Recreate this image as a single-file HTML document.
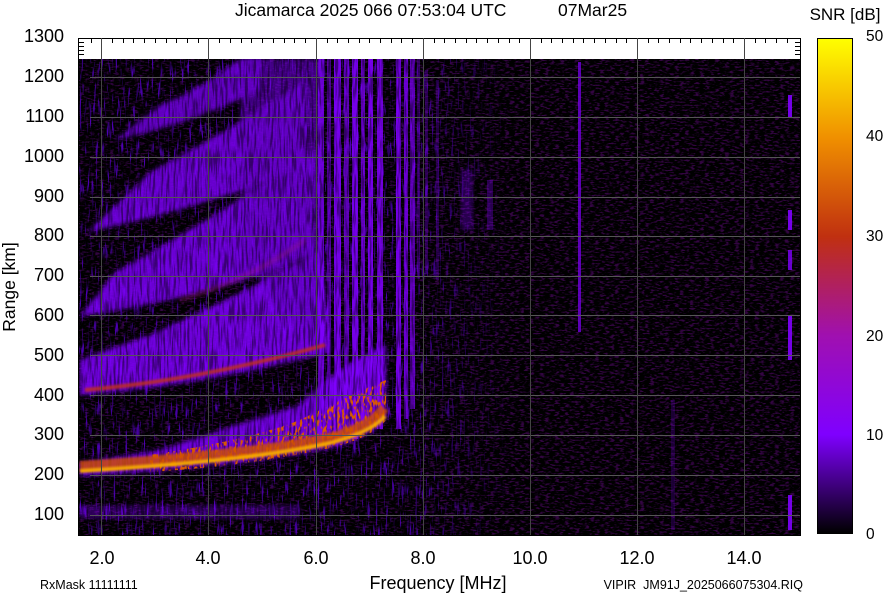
<!DOCTYPE html>
<html><head><meta charset="utf-8"><style>
html,body{margin:0;padding:0;background:#fff;}
svg{display:block;font-family:"Liberation Sans",Arial,sans-serif;}
filter{color-interpolation-filters:sRGB;}
</style></head><body>
<svg width="884" height="595" viewBox="0 0 884 595" xmlns="http://www.w3.org/2000/svg">
<defs>
<clipPath id="pc"><rect x="79" y="59" width="721" height="476"/></clipPath>
<filter id="nz" x="0" y="0" width="100%" height="100%" color-interpolation-filters="sRGB">
<feTurbulence type="fractalNoise" baseFrequency="0.2 0.6" numOctaves="2" seed="3"/>
<feColorMatrix type="matrix" values="0 0 0 0 0.2  0 0 0 0 0.02  0 0 0 0 0.26  5 0 0 0 -2.5"/>
</filter>
<filter id="nzL" x="0" y="0" width="100%" height="100%" color-interpolation-filters="sRGB">
<feTurbulence type="fractalNoise" baseFrequency="0.5 0.05" numOctaves="2" seed="5"/>
<feColorMatrix type="matrix" values="0 0 0 0 0.3  0 0 0 0 0  0 0 0 0 0.7  6 0 0 0 -3.5"/>
</filter>
<filter id="nz2" x="0" y="0" width="100%" height="100%" color-interpolation-filters="sRGB">
<feTurbulence type="fractalNoise" baseFrequency="0.5 0.04" numOctaves="2" seed="8"/>
<feColorMatrix type="matrix" values="0 0 0 0 0  0 0 0 0 0  0 0 0 0 0  -5 0 0 0 2.7"/>
</filter>
<filter id="nzO" x="0" y="0" width="100%" height="100%" color-interpolation-filters="sRGB">
<feTurbulence type="fractalNoise" baseFrequency="0.4 0.15" numOctaves="2" seed="11"/>
<feColorMatrix type="matrix" values="0 0 0 0 0.85  0 0 0 0 0.35  0 0 0 0 0  6 0 0 0 -3.0"/>
</filter>
<filter id="bl" color-interpolation-filters="sRGB"><feGaussianBlur stdDeviation="2"/></filter>
<filter id="bl1" color-interpolation-filters="sRGB"><feGaussianBlur stdDeviation="1"/></filter>
<linearGradient id="cb" x1="0" y1="0" x2="0" y2="1">
<stop offset="0" stop-color="#ffff00"/><stop offset="0.2" stop-color="#f09000"/>
<stop offset="0.4" stop-color="#c03010"/><stop offset="0.6" stop-color="#a010b0"/>
<stop offset="0.8" stop-color="#7f00ff"/><stop offset="0.9" stop-color="#400080"/>
<stop offset="1" stop-color="#000000"/></linearGradient>
<linearGradient id="fadeL" x1="0" y1="0" x2="1" y2="0">
<stop offset="0" stop-color="#fff" stop-opacity="1"/><stop offset="0.45" stop-color="#fff" stop-opacity="1"/><stop offset="0.6" stop-color="#fff" stop-opacity="0"/></linearGradient>
<mask id="mL"><rect x="79" y="59" width="721" height="476" fill="url(#fadeL)"/></mask>
<clipPath id="oc"><path d="M150,455 Q250,440 300,420 Q350,395 386,380 L386,420 Q372,438 330,448 Q250,466 150,472 Z"/></clipPath>
</defs>

<text x="235" y="16" font-size="17.5">Jicamarca 2025 066 07:53:04 UTC</text>
<text x="558" y="16" font-size="17.5">07Mar25</text>
<text x="845" y="20" font-size="17" text-anchor="middle">SNR [dB]</text>

<rect x="78.5" y="38.5" width="722" height="497" fill="#fff" stroke="#000"/>
<g clip-path="url(#pc)">
<rect x="79" y="59" width="721" height="476" fill="#000"/>
<rect x="79" y="59" width="721" height="476" filter="url(#nz)"/>
<rect x="79" y="59" width="721" height="476" filter="url(#nzL)" mask="url(#mL)"/>
<g opacity="0.85">
<path d="M115,140 Q200,122 262,88 L262,59 L240,59 Q200,90 160,105 Z" fill="#7000e0" filter="url(#bl)"/>
<path d="M88,232 Q200,208 305,168 L305,80 Q240,125 150,172 Z" fill="#7800f0" filter="url(#bl)"/>
<path d="M80,316 Q200,300 312,255 L315,150 Q220,215 115,272 Z" fill="#7c00f8" filter="url(#bl)"/>
<path d="M80,395 Q200,386 330,352 L322,250 Q230,300 150,335 Q100,352 80,360 Z" fill="#8000ff" filter="url(#bl)"/>
<path d="M240,59 L320,59 L320,330 Q290,330 240,250 Z" fill="#7000e0" opacity="0.7" filter="url(#bl)"/>
<path d="M80,476 Q250,466 330,448 Q372,438 386,418 L386,345 Q330,370 300,405 Q220,430 160,450 Q100,460 80,462 Z" fill="#8000ff" filter="url(#bl)"/>
</g>
<g fill="#8000ff">
<rect x="318" y="59" width="6" height="380" opacity="0.8"/>
<rect x="327" y="59" width="4" height="370" opacity="0.6"/>
<rect x="334" y="59" width="7" height="380" opacity="0.9"/>
<rect x="344" y="59" width="5" height="360" opacity="0.7"/>
<rect x="352" y="59" width="6" height="380" opacity="0.9"/>
<rect x="361" y="59" width="4" height="370" opacity="0.75"/>
<rect x="368" y="59" width="5" height="360" opacity="0.9"/>
<rect x="377" y="59" width="6" height="370" opacity="0.85"/>
<rect x="396" y="59" width="5" height="370" opacity="0.9"/>
<rect x="404" y="59" width="4" height="360" opacity="0.8"/>
<rect x="410" y="59" width="5" height="350" opacity="0.7"/>
<rect x="417" y="59" width="3" height="220" opacity="0.35"/>
<rect x="425" y="70" width="3" height="200" opacity="0.3"/>
<rect x="436" y="80" width="3" height="200" opacity="0.25"/>
<rect x="461" y="170" width="12" height="60" opacity="0.3" filter="url(#bl)"/>
<rect x="487" y="180" width="6" height="50" opacity="0.3"/>
<rect x="578" y="62" width="3" height="270" opacity="0.7"/>
<rect x="671" y="400" width="4" height="130" opacity="0.2"/>
<rect x="788" y="95" width="4" height="22" opacity="0.9"/>
<rect x="788" y="210" width="4" height="20" opacity="0.9"/>
<rect x="788" y="250" width="4" height="20" opacity="0.8"/>
<rect x="788" y="315" width="4" height="45" opacity="0.9"/>
<rect x="788" y="495" width="4" height="35" opacity="0.9"/>
<rect x="80" y="505" width="220" height="14" opacity="0.35" filter="url(#bl)"/>
</g>
<rect x="79" y="59" width="340" height="476" filter="url(#nz2)" opacity="0.45"/>
<g opacity="0.85">
<path d="M85,390 Q200,380 325,345" stroke="#c03020" stroke-width="4" fill="none" filter="url(#bl1)"/>
<path d="M180,300 Q250,280 305,240" stroke="#a02070" stroke-width="3" fill="none" opacity="0.6" filter="url(#bl)"/>
</g>
<rect x="79" y="370" width="310" height="110" filter="url(#nzO)" clip-path="url(#oc)"/>
<path d="M80,466 Q250,455 330,438 Q372,426 384,408" stroke="#d05000" stroke-width="10" fill="none" opacity="0.8" filter="url(#bl1)"/>
<path d="M80,471 Q250,461 330,443 Q372,432 385,416" stroke="#f5a800" stroke-width="4" fill="none" filter="url(#bl1)"/>
<g stroke="#555" stroke-width="1">
<line x1="90" y1="515.5" x2="800" y2="515.5"/><line x1="90" y1="475.5" x2="800" y2="475.5"/>
<line x1="90" y1="435.5" x2="800" y2="435.5"/><line x1="90" y1="395.5" x2="800" y2="395.5"/>
<line x1="90" y1="355.5" x2="800" y2="355.5"/><line x1="90" y1="315.5" x2="800" y2="315.5"/>
<line x1="90" y1="276.5" x2="800" y2="276.5"/><line x1="90" y1="236.5" x2="800" y2="236.5"/>
<line x1="90" y1="197.5" x2="800" y2="197.5"/><line x1="90" y1="157.5" x2="800" y2="157.5"/>
<line x1="90" y1="117.5" x2="800" y2="117.5"/><line x1="90" y1="77.5" x2="800" y2="77.5"/>
</g>
</g>
<g stroke="#444" stroke-width="1">
<line x1="101.5" y1="38" x2="101.5" y2="535"/><line x1="208.5" y1="38" x2="208.5" y2="535"/>
<line x1="316.5" y1="38" x2="316.5" y2="535"/><line x1="423.5" y1="38" x2="423.5" y2="535"/>
<line x1="530.5" y1="38" x2="530.5" y2="535"/><line x1="637.5" y1="38" x2="637.5" y2="535"/>
<line x1="744.5" y1="38" x2="744.5" y2="535"/>
</g>
<g stroke="#000" stroke-width="1">
<path d="M112.5,38v5M123.5,38v5M133.5,38v5M144.5,38v5M155.5,38v5M166.5,38v5M176.5,38v5M187.5,38v5M198.5,38v5M219.5,38v5M230.5,38v5M241.5,38v5M251.5,38v5M262.5,38v5M273.5,38v5M284.5,38v5M294.5,38v5M305.5,38v5M327.5,38v5M337.5,38v5M348.5,38v5M359.5,38v5M369.5,38v5M380.5,38v5M391.5,38v5M401.5,38v5M412.5,38v5M434.5,38v5M444.5,38v5M455.5,38v5M466.5,38v5M476.5,38v5M487.5,38v5M498.5,38v5M509.5,38v5M519.5,38v5M541.5,38v5M551.5,38v5M562.5,38v5M573.5,38v5M583.5,38v5M594.5,38v5M605.5,38v5M616.5,38v5M626.5,38v5M648.5,38v5M658.5,38v5M669.5,38v5M680.5,38v5M690.5,38v5M701.5,38v5M712.5,38v5M723.5,38v5M733.5,38v5M755.5,38v5M765.5,38v5M776.5,38v5M787.5,38v5M91.5,38v5"/>
<path d="M79,42.5h5M79,46.5h5M79,50.5h5M79,54.5h5M795,42.5h5M795,46.5h5M795,50.5h5M795,54.5h5"/>
</g>
<g font-size="18" text-anchor="end">
<text x="64" y="42">1300</text><text x="64" y="82">1200</text><text x="64" y="122">1100</text>
<text x="64" y="162">1000</text><text x="64" y="202">900</text><text x="64" y="241">800</text>
<text x="64" y="281">700</text><text x="64" y="321">600</text><text x="64" y="361">500</text>
<text x="64" y="401">400</text><text x="64" y="440">300</text><text x="64" y="480">200</text>
<text x="64" y="520">100</text>
</g>
<text transform="translate(15,287) rotate(-90)" font-size="17.5" text-anchor="middle">Range [km]</text>
<g font-size="18" text-anchor="middle">
<text x="102" y="564">2.0</text><text x="208" y="564">4.0</text><text x="316" y="564">6.0</text>
<text x="423" y="564">8.0</text><text x="530" y="564">10.0</text><text x="637" y="564">12.0</text>
<text x="744" y="564">14.0</text>
</g>
<text x="438" y="589" font-size="18" text-anchor="middle">Frequency [MHz]</text>
<text x="40" y="589" font-size="12.5">RxMask 11111111</text>
<text x="803" y="589" font-size="12.5" text-anchor="end" xml:space="preserve">VIPIR  JM91J_2025066075304.RIQ</text>
<rect x="817.5" y="38.5" width="35" height="495" fill="url(#cb)" stroke="#000"/>
<g font-size="15.5">
<text x="866" y="41">50</text><text x="866" y="141">40</text><text x="866" y="241">30</text>
<text x="866" y="341">20</text><text x="866" y="440">10</text><text x="866" y="539">0</text>
</g>
</svg>
</body></html>
